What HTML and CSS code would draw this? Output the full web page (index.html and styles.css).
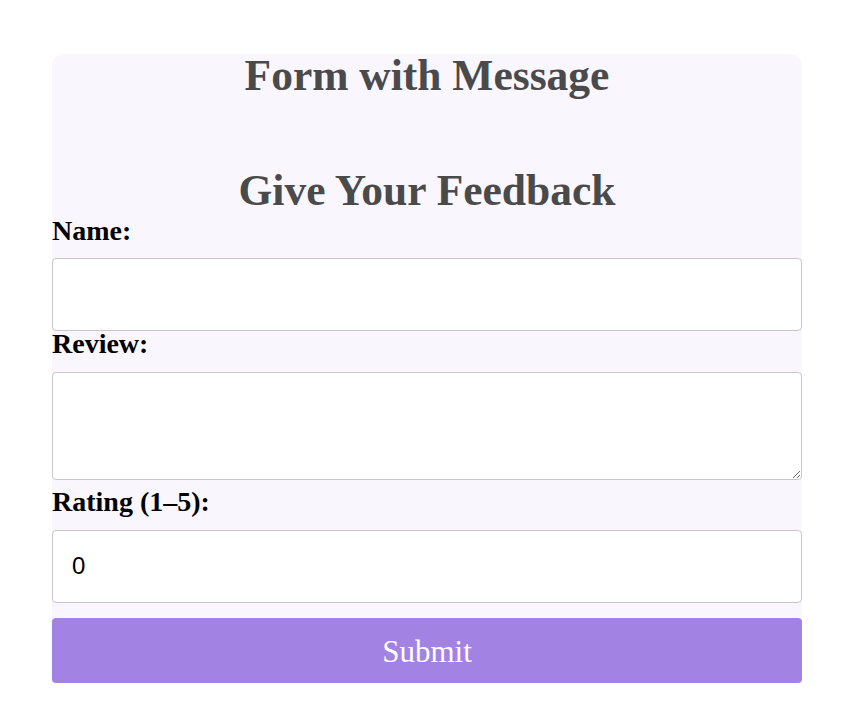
FILE: index.html
```html
<!DOCTYPE html>
<html>
<head>
<meta charset="utf-8">
<link rel="stylesheet" href="styles.css">
</head>
<body>
<div class="wrap">
  <form class="card">
    <h1 class="title">Form with Message</h1>
    <h2 class="title sub">Give Your Feedback</h2>
    <label class="lbl lbl-first" for="name">Name:</label>
    <input class="field" id="name" type="text">
    <label class="lbl" for="review">Review:</label>
    <textarea class="field area" id="review"></textarea>
    <label class="lbl lbl-after-area" for="rating">Rating (1–5):</label>
    <input class="field num" id="rating" type="text" value="0">
  </form>
  <button class="submit" type="button">Submit</button>
</div>
</body>
</html>
```
FILE: styles.css
```css
html, body {
  margin: 0;
  padding: 0;
  background: #ffffff;
}
.wrap {
  width: 750px;
  margin: 54px 0 0 52px;
  display: flex;
  flex-direction: column;
}
.card {
  background: #f9f6fe;
  border-radius: 12px 12px 0 0;
  display: flex;
  flex-direction: column;
  padding-bottom: 15px;
}
.title {
  margin: 0;
  text-align: center;
  font-family: "Liberation Serif", "Times New Roman", serif;
  font-weight: 700;
  font-size: 43.5px;
  line-height: 42px;
  color: #4a4a4a;
}
.sub {
  margin-top: 73px;
}
.lbl {
  display: block;
  font-family: "Liberation Serif", "Times New Roman", serif;
  font-weight: 700;
  font-size: 28px;
  line-height: 26px;
  color: #000;
  margin: 0 0 14.5px 0;
}
.lbl-first {
  margin-top: 6.5px;
}
.lbl-after-area {
  margin-top: 9.5px;
}
.field {
  box-sizing: border-box;
  width: 750px;
  height: 73px;
  margin: 0;
  border: 1px solid #c8c8c8;
  border-radius: 4px;
  background: #fff;
  padding: 0 19px;
  font-family: "Liberation Sans", Arial, sans-serif;
  font-size: 24px;
  color: #000;
  outline: none;
}
.area {
  height: 108px;
  resize: vertical;
  display: block;
}
.submit {
  height: 65px;
  width: 750px;
  border: none;
  border-radius: 4px;
  background: #a283e3;
  color: #ffffff;
  font-family: "Liberation Serif", "Times New Roman", serif;
  font-size: 31px;
  padding: 3px 0 0 0;
  cursor: pointer;
}
```
